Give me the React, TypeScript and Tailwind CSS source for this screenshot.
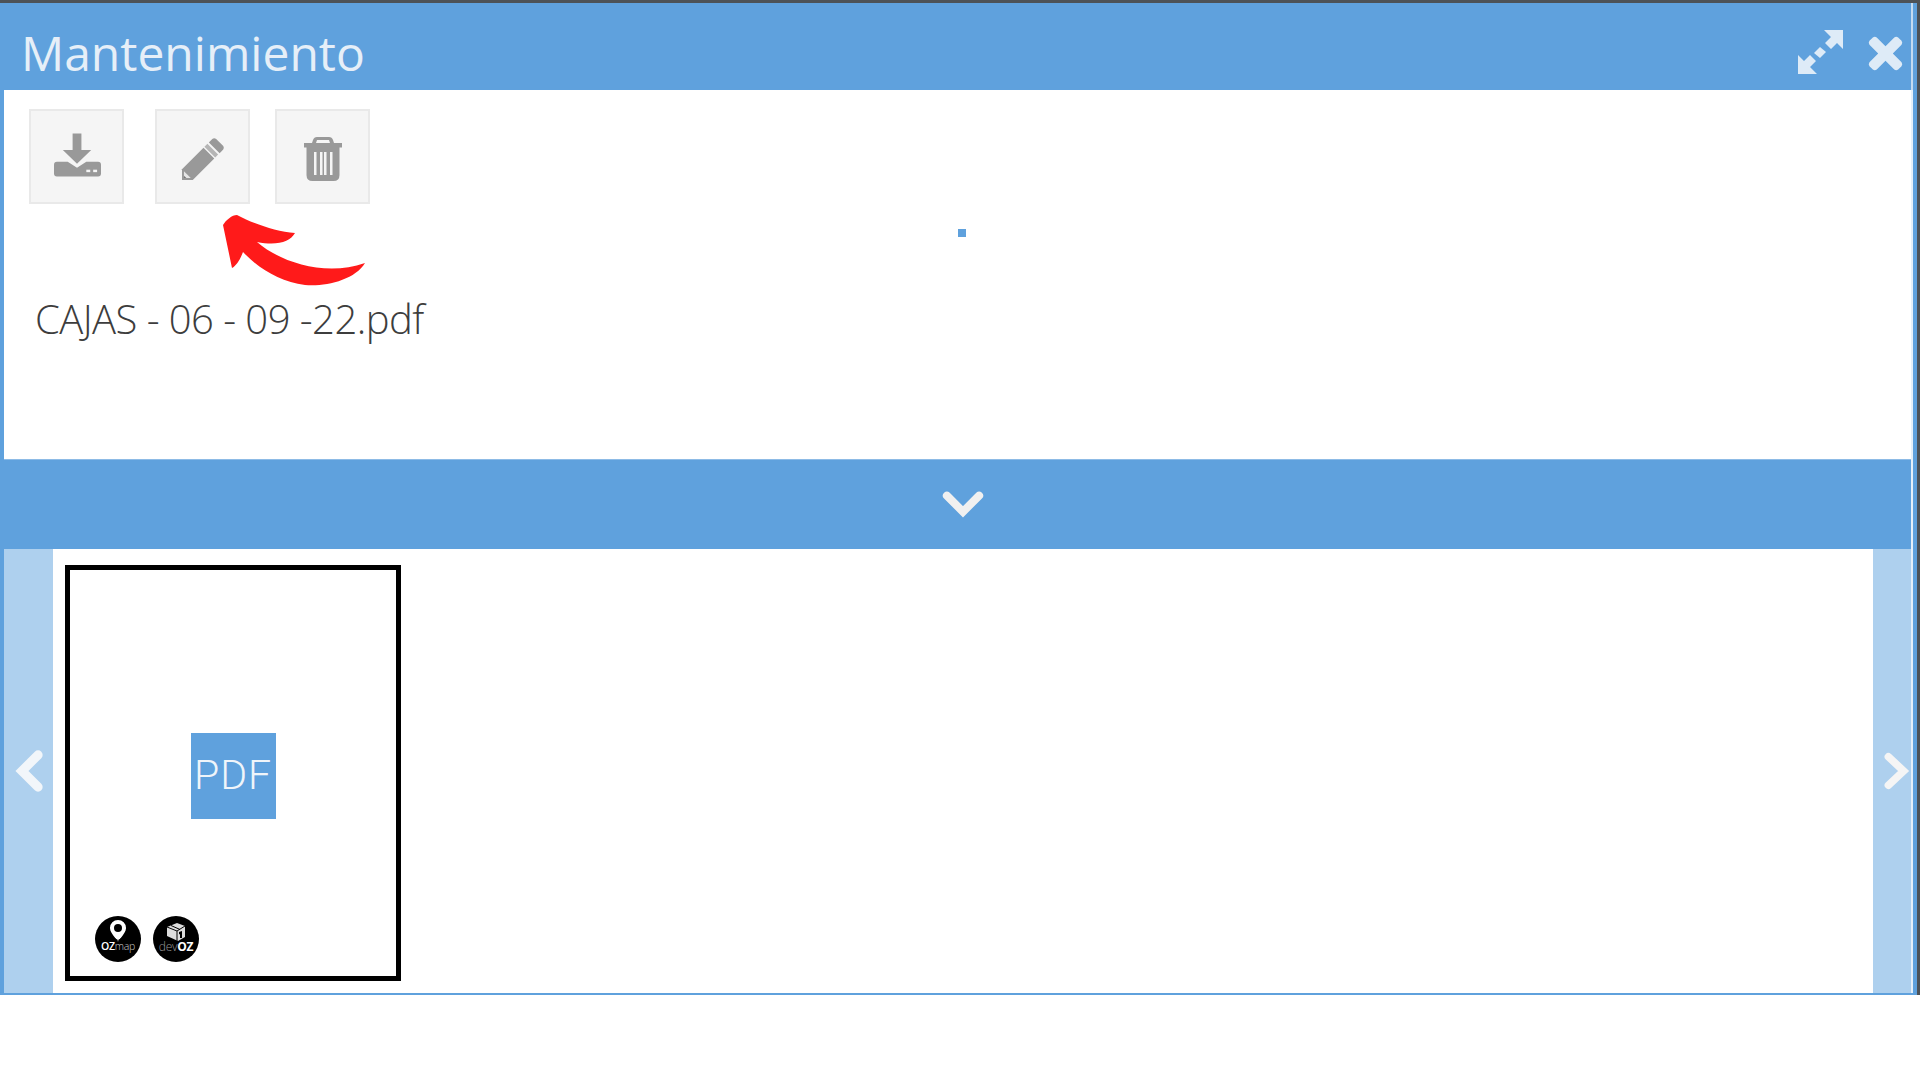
function IconBox({ children, className }: { children: React.ReactNode; className: string }) {
  return (
    <div className={`w-[95px] h-[95px] bg-[#f5f5f5] border-2 border-[#e9e9e9] flex items-center justify-center ${className}`}>
      {children}
    </div>
  );
}

function Chevron({ d, className, w }: { d: string; className: string; w: number }) {
  return (
    <svg viewBox="0 0 40 40" className={className} fill="none" stroke="currentColor" strokeWidth={w} strokeLinecap="round" strokeLinejoin="miter">
      <path d={d} />
    </svg>
  );
}

export default function App() {
  return (
    <div className="relative w-[1920px] h-[1080px] bg-white overflow-hidden" style={{ fontFamily: '"Open Sans", sans-serif' }}>
      <div className="w-full h-[995px] border-t-[3px] border-r-[3px] border-[#4d5257] bg-[#5fa1dd] flex flex-col pr-[4px] pb-[2px]">
        {/* header */}
        <div className="h-[87px] shrink-0 flex items-center justify-between pl-[21px] pr-[8px] bg-[#5fa1dd] border-r-[2px] border-[#c4dcf2]">
          <span className="text-[48px] leading-none text-[#e6eff8] relative top-[6px]">Mantenimiento</span>
          <div className="flex items-center gap-[24px] text-[#deebf7] relative top-[7px]">
            <svg viewBox="0 0 46 44" className="w-[46px] h-[44px] relative top-[-2px]" fill="currentColor">
              <path d="M26 0h19v19l-6-6-6 6-6-6 6-6z" />
              <path d="M19 44H0V25l6 6 6-6 6 6-6 6z" />
              <path d="M16 23l6-6 6 5-6 6z" />
            </svg>
            <svg viewBox="0 0 36 36" className="w-[35px] h-[35px]" fill="currentColor">
              <path d="M9 1.500 18 10.500 27 1.500q2-1.500 4 0l3.500 3.500q1.500 2 0 4L25.500 18l9 9q1.500 2 0 4L31 34.500q-2 1.500-4 0L18 25.500l-9 9q-2 1.500-4 0L1.500 31q-1.500-2 0-4l9-9-9-9q-1.500-2 0-4L5 1.500q2-1.500 4 0z" />
            </svg>
          </div>
        </div>

        {/* body */}
        <div className="flex-1 min-h-0 ml-[4px] flex flex-col bg-white border-r-[2px] border-[#e6f0f9]">
          <div className="h-[369px] shrink-0 flex flex-col">
            <div className="flex pl-[25px] pt-[19px]">
              <IconBox className="mr-[31px]">
                <svg viewBox="0 0 48 44" className="w-[47px] h-[44px] relative top-[-2px] left-[1px]" fill="#999999">
                  <path d="M19 0h9v17h10L23.500 31 9 17h10z" />
                  <path d="M3 29h11l9.500 6 9.500-6h12q3 0 3 3v9q0 3-3 3H3q-3 0-3-3v-9q0-3 3-3z" />
                  <rect x="33" y="37" width="4" height="2.500" fill="#f5f5f5" />
                  <rect x="40" y="37" width="4" height="2.500" fill="#f5f5f5" />
                </svg>
              </IconBox>
              <IconBox className="mr-[25px]">
                <svg viewBox="0 0 44 44" className="w-[43px] h-[43px] relative top-[3px]" fill="#999999">
                  <path d="M32 1q2-1.500 4 0l7 7q1.500 2 0 4l-3.500 3.500-11-11z" />
                  <path d="M27 6l11 11-3 3-11-11z" fill="#b5b5b5" />
                  <path d="M23 10l11 11-22 22H1V32z" />
                  <path d="M3 34l7 7H3z" fill="#e6e6e6" />
                  <path d="M3 38.500V41h2.500z" fill="#777777" />
                </svg>
              </IconBox>
              <IconBox className="">
                <svg viewBox="0 0 40 44" className="w-[40px] h-[44px] relative top-[2px]" fill="#999999">
                  <path d="M14 0h12q3 0 4 3l1 3h8v4.500H1V6h8l1-3q1-3 4-3zm-1 6h14l-1-3H14z" fillRule="evenodd" />
                  <path d="M3.500 10h33v28q0 6-6 6h-21q-6 0-6-6z" />
                  <rect x="11" y="15" width="2.500" height="23" fill="#f5f5f5" />
                  <rect x="17" y="15" width="2.500" height="23" fill="#f5f5f5" />
                  <rect x="21" y="15" width="2.500" height="23" fill="#f5f5f5" />
                  <rect x="27" y="15" width="2.500" height="23" fill="#f5f5f5" />
                </svg>
              </IconBox>
            </div>
            <div className="self-center w-[8px] h-[8px] bg-[#5fa1dd] mt-[25px] relative left-[4px]" />
            <div className="pl-[31px] mt-[55px]">
              <span className="text-[40px] leading-[54px] font-light text-[#3d3d3d] tracking-[-0.55px]">CAJAS - 06 - 09 -22.pdf</span>
            </div>
          </div>

          {/* collapse bar */}
          <div className="h-[90px] shrink-0 bg-[#5fa1dd] flex items-center justify-center border-t border-[#8dbbe6] text-[#f0f0f0]">
            <Chevron w={7} d="M6 11 20 25 34 11" className="w-[46px] h-[46px] relative left-[5px] top-[1px]" />
          </div>

          {/* gallery */}
          <div className="flex-1 min-h-0 flex">
            <div className="w-[49px] shrink-0 bg-[#aed0ee] flex items-center justify-center text-[#f2f6fa]">
              <Chevron w={8} d="M27 6 13 20 27 34" className="w-[46px] h-[48px] relative left-[1px]" />
            </div>
            <div className="flex-1 pl-[12px] pt-[16px]">
              <div className="relative w-[336px] h-[416px] border-[5px] border-black flex items-center justify-center">
                <div className="w-[85px] h-[86px] mt-[5px] bg-[#5fa1dd] text-[#f0f5fa] text-[41px] font-light leading-none flex items-center justify-center tracking-[1px]" style={{ fontFamily: 'Roboto, sans-serif' }}>
                  PDF
                </div>
                <div className="absolute left-[25px] bottom-[14px] flex gap-[12px]">
                  <div className="relative w-[46px] h-[46px] rounded-full bg-black overflow-hidden flex flex-col items-center">
                    <svg viewBox="0 0 20 28" className="w-[18px] h-[25px] mt-[4px]">
                      <path d="M10 0a9 9 0 0 1 9 9c0 4-3 7-5 10l-4 5-4-5C4 16 1 13 1 9a9 9 0 0 1 9-9z" fill="#ffffff" />
                      <circle cx="10" cy="9" r="4.500" fill="#000000" />
                      <path d="M2 18l8 5 8-5" stroke="#000000" strokeWidth="1" fill="none" />
                    </svg>
                    <span className="text-[10.500px] leading-[10px] text-white font-semibold mt-[-4px] tracking-[-0.3px]">OZ<span className="font-light text-[#cccccc]">map</span></span>
                  </div>
                  <div className="relative w-[46px] h-[46px] rounded-full bg-black overflow-hidden flex flex-col items-center">
                    <svg viewBox="0 0 20 20" className="w-[20px] h-[20px] mt-[6px]">
                      <path d="M1 5 11 1l8 3v11l-7 4-11-5z" fill="#dddddd" />
                      <path d="M11 9v10M1 5l10 4 8-5M5 3.500l9 4" stroke="#000000" strokeWidth="1" fill="none" />
                      <path d="M13 10l3-1v7h-2v-4l-1 .5z" fill="#000000" />
                    </svg>
                    <span className="text-[12px] leading-[12px] text-[#999999] font-light tracking-[-0.3px] mt-[-1px]">dev<span className="font-bold text-white">OZ</span></span>
                  </div>
                </div>
              </div>
            </div>
            <div className="w-[38px] shrink-0 bg-[#aed0ee] flex items-center justify-end text-[#f5f5f5]">
              <Chevron w={8} d="M12 5 28 20 12 35" className="w-[40px] h-[50px] relative left-[4px]" />
            </div>
          </div>
        </div>
      </div>

      {/* annotation arrow */}
      <svg className="absolute left-[215px] top-[208px] w-[160px] h-[85px]" viewBox="215 208 160 85" fill="#ff1a1a">
        <path d="M237 215C250 222 275 232 295 233C290 242 277 246 257 242C280 262 325 277 365 263C355 280 325 287 305 285C280 282 258 268 243 252C240 260 236 266 232 268L223 225C226 220 232 215 237 215Z" />
      </svg>
    </div>
  );
}
